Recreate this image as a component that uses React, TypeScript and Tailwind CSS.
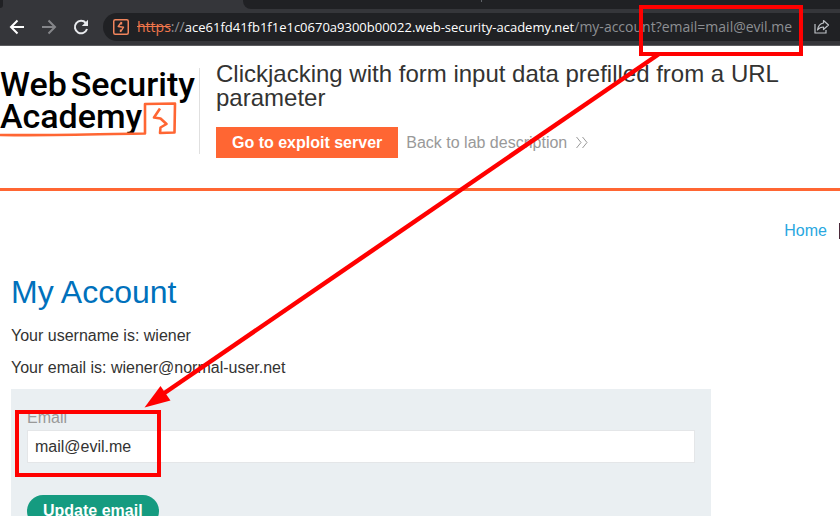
import React from "react";

function BackIcon() {
  return (
    <svg width="16" height="16" viewBox="0 0 16 16" fill="none" stroke="currentColor" strokeWidth="2" aria-hidden="true">
      <path d="M15 8H2.5M8.5 1.5 2 8l6.5 6.5" />
    </svg>
  );
}

function ForwardIcon() {
  return (
    <svg width="16" height="16" viewBox="0 0 16 16" fill="none" stroke="currentColor" strokeWidth="2" aria-hidden="true">
      <path d="M1 8h12.5M7.500 1.500 14 8l-6.500 6.500" />
    </svg>
  );
}

function ReloadIcon() {
  return (
    <svg width="16" height="16" viewBox="0 0 16 16" fill="none" aria-hidden="true">
      <path d="M12.800 4A6.200 6.200 0 1 0 14 10" stroke="currentColor" strokeWidth="2" />
      <path d="M15 0.800V7H8.800Z" fill="currentColor" />
    </svg>
  );
}

function LightningBadge() {
  return (
    <svg width="16" height="16" viewBox="0 0 16 16" fill="none" className="shrink-0" aria-hidden="true">
      <rect x="0.750" y="0.750" width="14.500" height="14.500" rx="1.500" stroke="#f0845c" strokeWidth="1.500" />
      <path d="M8.500 3 5.200 7.500 10.500 8.200 7.500 13M8.500 3V5.500M7.500 13V10.500" stroke="#f0845c" strokeWidth="1.400" strokeLinejoin="round" />
    </svg>
  );
}

function ShareIcon() {
  return (
    <svg width="16" height="16" viewBox="0 0 16 16" fill="none" stroke="currentColor" strokeWidth="1.200" aria-hidden="true">
      <path d="M1 5V14H12V11" />
      <path d="M9.500 1.500 14.500 6 9.500 10.500V8C7 8 5 9 3.500 11 4 7.500 6 4.500 9.500 4Z" strokeLinejoin="round" />
    </svg>
  );
}

function BrowserBar() {
  return (
    <header className="border-b border-[#5b5c5f] bg-[#35363a]">
      <div className="flex h-[9px] bg-[#202124]">
        <div className="h-[9px] w-[3px] bg-[#35363a]">
          <div className="h-[8px] rounded-br-[3px] bg-[#202124]" />
        </div>
        <div className="w-[240px] bg-[#35363a]" />
        <div className="flex flex-1 bg-[#35363a]">
          <div className="flex-1 rounded-bl-lg bg-[#202124] pl-[238px]">
            <div className="h-[2px] w-px bg-[#5f6368]" />
          </div>
        </div>
      </div>
      <div className="flex h-9 items-center">
        <nav className="flex w-[103px] shrink-0 gap-4 pl-[9px]" aria-label="Browser controls">
          <button type="button" aria-label="Back" className="text-white"><BackIcon /></button>
          <button type="button" aria-label="Forward" className="text-[#85868a]"><ForwardIcon /></button>
          <button type="button" aria-label="Reload" className="text-[#e8eaed]"><ReloadIcon /></button>
        </nav>
        <div className="flex h-7 min-w-0 flex-1 items-center rounded-l-full bg-[#202124] pl-[10px]">
          <LightningBadge />
          <div className="ml-2 flex-1 whitespace-nowrap font-['Open_Sans','Noto_Sans',sans-serif] text-[14px] leading-5 text-[#8d8f93]">
            <span className="text-[#f0764b] line-through">https</span>://
            <span className="text-[13px] font-medium text-white">ace61fd41fb1f1e1c0670a9300b00022.web-security-academy.net</span>
            <span>/my-account?email=mail@evil.me</span>
          </div>
          <button type="button" aria-label="Share" className="mr-[10px] shrink-0 text-[#bdc1c6]"><ShareIcon /></button>
        </div>
      </div>
    </header>
  );
}

function AcademyLogo() {
  return (
    <a href="#academy" aria-label="Web Security Academy" className="relative block h-[86px] w-[200px] shrink-0 border-r border-[#e0e0e0] font-[Roboto,sans-serif] text-[34px] leading-8 font-medium whitespace-nowrap text-black">
      <span className="flex gap-1"><span>Web</span><span>Security</span></span>
      <span className="block">Academy</span>
      <svg className="absolute top-0 left-0" width="199" height="86" viewBox="0 0 199 86" fill="none" stroke="#ff6633" strokeWidth="2.600" aria-hidden="true">
        <path d="M0 67C40 67.800 100 66 145 65.500L145 36 175 35.500 174.500 64.500 160 65 160.500 59.500 166.500 56 160.500 50.500 154 49.500 160 40.500" strokeLinejoin="round" />
      </svg>
    </a>
  );
}

function LabHeader() {
  return (
    <section className="flex gap-4 border-b-3 border-[#ff6633] pt-[22px] pb-[34px]">
      <AcademyLogo />
      <div className="-mt-[6px] -mb-1 min-w-0 flex-1 pr-6">
        <h2 className="text-[24px] leading-6 text-[#333332]">Clickjacking with form input data prefilled from a URL parameter</h2>
        <div className="mt-[17px] flex items-center gap-2">
          <a href="#exploit" className="bg-[#ff6633] px-4 py-1 text-[16px] leading-[23px] font-bold text-white">Go to exploit server</a>
          <a href="#lab" className="flex items-center gap-2 text-[16px] text-[#999999]">
            Back to lab description
            <svg width="13" height="13" viewBox="0 0 13 13" fill="none" stroke="currentColor" aria-hidden="true">
              <path d="m1.500 1 4.500 5.500L1.500 12M7.500 1 12 6.500 7.500 12" />
            </svg>
          </a>
        </div>
      </div>
    </section>
  );
}

function Account() {
  return (
    <main className="pt-7 text-[16px] leading-6 text-[#333332]">
      <nav className="flex justify-end gap-3 whitespace-nowrap" aria-label="Account">
        <a href="#home" className="text-[#29a7df]">Home</a>
        <span className="w-px bg-[#4c2b3b] bg-clip-content py-1" />
      </nav>
      <div className="w-full max-w-[711px] pl-[11px]">
        <h1 className="mt-[29px] text-[32px] leading-10 text-[#0071bc]">My Account</h1>
        <p className="mt-3">Your username is: wiener</p>
        <p className="mt-2">Your email is: wiener@normal-user.net</p>
        <form className="mt-[9px] bg-[#eaeff2] px-4 pt-[17px] pb-4" onSubmit={(e) => e.preventDefault()}>
          <label htmlFor="email" className="block text-[#999999]">Email</label>
          <input id="email" type="email" defaultValue="mail@evil.me" className="block h-[33px] w-full border border-[#e4e6e8] bg-white px-[7px] text-[#333332] outline-none" />
          <button type="submit" className="mt-8 h-8 rounded-full bg-[#159b80] px-4 leading-8 font-bold text-white">Update email</button>
        </form>
      </div>
    </main>
  );
}

function Annotations() {
  return (
    <svg className="pointer-events-none absolute top-0 left-0" width="840" height="516" viewBox="0 0 840 516" aria-hidden="true">
      <rect x="641" y="7" width="160" height="47" fill="none" stroke="#ff0000" strokeWidth="4" />
      <rect x="17" y="412" width="142" height="63" fill="none" stroke="#ff0000" strokeWidth="4" />
      <path d="M659 54 163 394" stroke="#ff0000" strokeWidth="4.500" />
      <path d="m144.500 407.500 16-21.500 10 14.500Z" fill="#ff0000" />
    </svg>
  );
}

export default function App() {
  return (
    <div className="relative h-screen overflow-hidden bg-white font-['Liberation_Sans',Arial,sans-serif]">
      <BrowserBar />
      <LabHeader />
      <Account />
      <Annotations />
    </div>
  );
}
